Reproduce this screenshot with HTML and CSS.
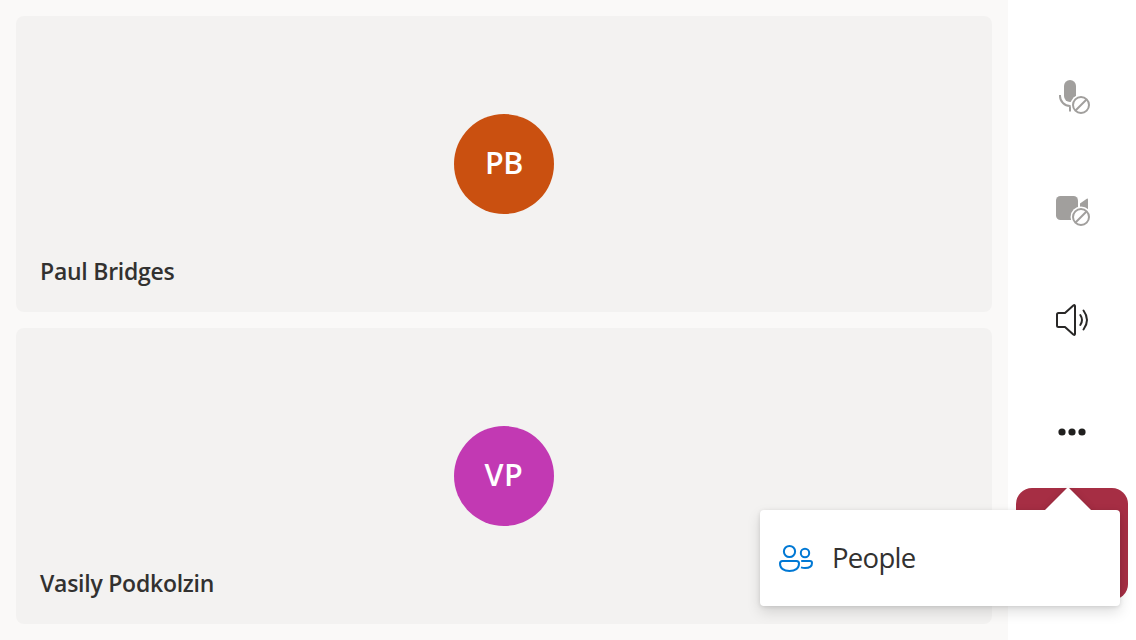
FILE: index.html
```html
<!DOCTYPE html>
<html lang="en">
<head>
<meta charset="utf-8">
<title>Call</title>
<link rel="stylesheet" href="styles.css">
</head>
<body>
<div class="call">
  <main class="gallery">
    <section class="tile">
      <div class="avatar avatar-orange"><span>PB</span></div>
      <div class="name">Paul Bridges</div>
    </section>
    <section class="tile">
      <div class="avatar avatar-magenta"><span>VP</span></div>
      <div class="name">Vasily Podkolzin</div>
    </section>
  </main>
  <aside class="controls">
    <button class="control" aria-label="Microphone">
      <svg width="40" height="40" viewBox="0 0 40 40" fill="none">
        <rect x="12" y="4" width="12" height="22" rx="6" fill="#a19f9d"/>
        <path d="M8 19v1c0 5.500 4.500 10 10 10v5.500" stroke="#a19f9d" stroke-width="2"/>
        <circle cx="29" cy="29" r="10.500" fill="#fff"/>
        <circle cx="29" cy="29" r="8" stroke="#a19f9d" stroke-width="2"/>
        <path d="M23.500 34.500l11-11" stroke="#a19f9d" stroke-width="2"/>
      </svg>
    </button>
    <button class="control" aria-label="Camera">
      <svg width="40" height="40" viewBox="0 0 40 40" fill="none">
        <rect x="4" y="8" width="22" height="24" rx="4.500" fill="#a19f9d"/>
        <path d="M28 15.500l6.800-4.800q1.200-.6 1.200.7V24h-8z" fill="#a19f9d"/>
        <circle cx="29" cy="29" r="10.500" fill="#fff"/>
        <circle cx="29" cy="29" r="8" stroke="#a19f9d" stroke-width="2"/>
        <path d="M23.500 34.500l11-11" stroke="#a19f9d" stroke-width="2"/>
      </svg>
    </button>
    <button class="control" aria-label="Speaker">
      <svg width="40" height="40" viewBox="0 0 40 40" fill="none" stroke="#292827" stroke-width="2" stroke-linecap="round" stroke-linejoin="round">
        <path d="M6.500 13H13l8.300-7.500q1.700-1.200 1.700.7v27.600q0 1.900-1.700.7L13 27H6.500Q5 27 5 25.500v-11Q5 13 6.500 13z"/>
        <path d="M28.300 15q3.400 5 0 10M31.500 10.500q7 9.500 0 19"/>
      </svg>
    </button>
    <button class="control" aria-label="More">
      <svg width="40" height="40" viewBox="0 0 40 40" fill="#201f1e">
        <circle cx="10" cy="20" r="3.600"/><circle cx="20" cy="20" r="3.600"/><circle cx="30" cy="20" r="3.600"/>
      </svg>
    </button>
    <button class="control hangup" aria-label="Leave"></button>
  </aside>
  <div class="menu">
    <svg class="beak" width="48" height="24" viewBox="0 0 48 24"><path d="M0 24L24 0l24 24z" fill="#fff"/></svg>
    <svg class="people" width="40" height="40" viewBox="0 0 40 40" fill="none" stroke="#0078d4" stroke-width="2">
      <circle cx="13.500" cy="13.500" r="5.600"/>
      <circle cx="29" cy="15" r="4.200"/>
      <path d="M6.500 23h14q2.500 0 2.500 2.500C23 30.500 19 33 13.500 33S4 30.500 4 25.500Q4 23 6.500 23z"/>
      <path d="M25.200 23h8.800q2 0 2 2c0 3.500-3 5-7 5q-2 0-4-.6"/>
    </svg>
    <span class="menu-label">People</span>
  </div>
</div>
</body>
</html>
```
FILE: styles.css
```css
* { box-sizing: border-box; }
body {
  margin: 0;
  font-family: "Segoe UI", "Open Sans", "Noto Sans", sans-serif;
  color: #323130;
}
.call {
  position: relative;
  display: flex;
  width: 1136px;
  height: 640px;
  overflow: hidden;
  background: #faf9f8;
}
.gallery {
  width: 1008px;
  padding: 16px;
  display: grid;
  grid-template-rows: 1fr 1fr;
  gap: 16px;
}
.tile {
  display: grid;
  grid-template-rows: 98px 100px 1fr;
  justify-items: center;
  border-radius: 8px;
  background: #f3f2f1;
}
.avatar {
  grid-row: 2;
  width: 100px;
  height: 100px;
  border-radius: 50%;
  display: flex;
  align-items: center;
  justify-content: center;
  padding-bottom: 4px;
  color: #fff;
  font-size: 30.5px;
  font-weight: 600;
}
.avatar-orange { background: #ca5010; letter-spacing: -.4px; }
.avatar-magenta { background: #c239b3; letter-spacing: .6px; }
.name {
  grid-row: 3;
  justify-self: start;
  padding: 41px 0 0 24px;
  font-size: 23px;
  line-height: 32px;
  font-weight: 600;
  letter-spacing: -.25px;
  white-space: nowrap;
}
.controls {
  width: 128px;
  padding: 40px 8px;
  display: flex;
  flex-direction: column;
  align-items: center;
  background: #fff;
}
.control {
  flex: none;
  width: 112px;
  height: 112px;
  padding: 0;
  border: 0;
  background: none;
  display: flex;
  align-items: center;
  justify-content: center;
}
.hangup {
  border-radius: 16px;
  background: #a62e44;
}
.menu {
  position: absolute;
  left: 760px;
  top: 510px;
  width: 360px;
  height: 96px;
  padding: 0 16px;
  display: flex;
  align-items: center;
  gap: 16px;
  border-radius: 4px;
  background: #fff;
  box-shadow: 0 6px 14px rgba(0, 0, 0, .13), 0 1px 4px rgba(0, 0, 0, .11);
}
.beak {
  position: absolute;
  left: 284px;
  top: -23px;
  filter: drop-shadow(0 0 3px rgba(0, 0, 0, .12));
  clip-path: inset(-8px -8px 1px -8px);
}
.menu-label {
  font-size: 27.5px;
  line-height: 38px;
  letter-spacing: -.7px;
}
```
